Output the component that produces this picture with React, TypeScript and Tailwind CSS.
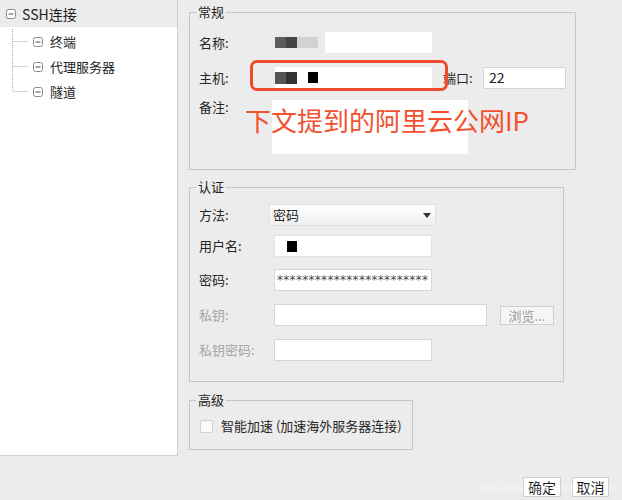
import React from "react";

const MinusBox = () => (
  <svg width="10" height="10" viewBox="0 0 10 10" className="shrink-0">
    <rect x="0.5" y="0.5" width="9" height="9" rx="2" fill="white" stroke="#8a8a8a" strokeWidth="1" />
    <line x1="2.5" y1="5" x2="7.5" y2="5" stroke="#6a6a6a" strokeWidth="1.2" />
  </svg>
);

function Legend({ children }: { children: React.ReactNode }) {
  return (
    <span className="absolute -top-[10px] left-[6px] px-[2px] bg-[#ececec] leading-[18px] text-[13px] text-[#222]">
      {children}
    </span>
  );
}

export default function App() {
  return (
    <div className="relative w-[622px] h-[500px] overflow-hidden bg-[#ececec] flex font-['Noto_Sans_CJK_SC',sans-serif] text-[13px] text-[#262626]">
      {/* Left tree panel */}
      <div className="w-[178px] h-[456px] shrink-0 bg-white border-r border-b border-[#cfcfcf] flex flex-col">
        <div className="h-[27px] bg-[#ebebeb] flex items-center pl-[6px] gap-[6px]">
          <MinusBox />
          <span className="text-[14px] leading-[18px] text-[#1e1e1e]">SSH连接</span>
        </div>
        <div className="flex">
          <svg width="30" height="78" viewBox="0 0 30 78" className="shrink-0">
            <line x1="12.5" y1="2" x2="12.5" y2="64" stroke="#a8a8a8" strokeDasharray="1 1" />
            <line x1="12.5" y1="14.5" x2="28" y2="14.5" stroke="#a8a8a8" strokeDasharray="1 1" />
            <line x1="12.5" y1="39.5" x2="28" y2="39.5" stroke="#a8a8a8" strokeDasharray="1 1" />
            <line x1="12.5" y1="64.5" x2="28" y2="64.5" stroke="#a8a8a8" strokeDasharray="1 1" />
          </svg>
          <div className="flex flex-col pt-[2px]">
            {["终端", "代理服务器", "隧道"].map((t) => (
              <div key={t} className="h-[25px] flex items-center pl-[3px] gap-[7px]">
                <MinusBox />
                <span className="text-[13px] leading-[18px] text-[#1e1e1e]">{t}</span>
              </div>
            ))}
          </div>
        </div>
      </div>

      {/* Right content */}
      <div className="flex-1 pl-[11px] pt-[12px] flex flex-col">
        {/* 常规 */}
        <div className="relative w-[387px] h-[158px] border border-[#c6c6c6] flex flex-col pt-[19px]">
          <Legend>常规</Legend>
          <div className="flex items-center h-[21px]">
            <span className="w-[85px] pl-[9px]">名称:</span>
            <div className="w-[157px] h-[21px] flex">
              <div className="w-[50px] h-[21px] bg-[#ebebeb] flex items-center">
                <div className="w-[11px] h-[11px] bg-[#5c5c5c]" />
                <div className="w-[11px] h-[11px] bg-[#444]" />
                <div className="w-[21px] h-[11px] bg-[#d2d2d2]" />
              </div>
              <div className="flex-1 h-[21px] bg-white" />
            </div>
          </div>
          <div className="flex items-center h-[21px] mt-[14px]">
            <span className="w-[85px] pl-[9px]">主机:</span>
            <div className="w-[157px] h-[21px] bg-white flex items-center">
              <div className="w-[11px] h-[12px] bg-[#555]" />
              <div className="w-[11px] h-[12px] bg-[#333]" />
              <div className="w-[10px] h-[11px] ml-[11px] bg-black" />
            </div>
            <span className="ml-[11px] w-[40px]">端口:</span>
            <div className="w-[83px] h-[22px] bg-white border border-[#d6d6d6] flex items-center pl-[5px] text-[14px] text-[#1a1a1a]">
              22
            </div>
          </div>
          <div className="flex items-start mt-[12px]">
            <span className="w-[82px] pl-[9px] leading-[16px] mt-[-1px]">备注:</span>
            <div className="w-[196px] h-[54px] bg-white" />
          </div>

          {/* red annotation */}
          <div className="absolute left-[60px] top-[47px] w-[198px] h-[31px] border-[3px] border-[#ef4a2c] rounded-[7px]" />
          <div className="absolute left-[55px] top-[92px] text-[26px] leading-[30px] text-[#f2512f] whitespace-nowrap">
            下文提到的阿里云公网IP
          </div>
        </div>

        {/* 认证 */}
        <div className="relative mt-[17px] w-[375px] h-[195px] border border-[#c6c6c6] flex flex-col pt-[16px]">
          <Legend>认证</Legend>
          <div className="flex items-center h-[22px]">
            <span className="w-[79px] pl-[9px]">方法:</span>
            <div className="w-[167px] h-[22px] bg-gradient-to-b from-white to-[#efefef] border border-[#e0e0e0] flex items-center justify-between pl-[3px] pr-[4px]">
              <span>密码</span>
              <svg width="8" height="5" viewBox="0 0 8 5">
                <path d="M0 0 L8 0 L4 5 Z" fill="#333" />
              </svg>
            </div>
          </div>
          <div className="flex items-center h-[22px] mt-[9px]">
            <span className="w-[84px] pl-[9px]">用户名:</span>
            <div className="w-[158px] h-[22px] bg-white border border-[#e2e2e2] flex items-center pl-[12px]">
              <div className="w-[10px] h-[11px] bg-black" />
            </div>
          </div>
          <div className="flex items-center h-[22px] mt-[12px]">
            <span className="w-[84px] pl-[9px]">密码:</span>
            <div className="w-[158px] h-[22px] bg-white border border-[#d6d6d6] flex items-center pl-[2px] font-['DejaVu_Sans',sans-serif] text-[12px] tracking-[0.3px] text-[#4a4a4a] overflow-hidden whitespace-nowrap">
              ************************
            </div>
          </div>
          <div className="flex items-center h-[22px] mt-[13px]">
            <span className="w-[84px] pl-[9px] text-[#a6a6a6]">私钥:</span>
            <div className="w-[213px] h-[22px] bg-white border border-[#d6d6d6]" />
            <div className="ml-[13px] w-[54px] h-[19px] bg-[#f5f5f5] border border-[#cfcfcf] flex items-center justify-center text-[13px] text-[#9a9a9a] leading-none">
              浏览...
            </div>
          </div>
          <div className="flex items-center h-[22px] mt-[13px]">
            <span className="w-[84px] pl-[9px] text-[#a6a6a6]">私钥密码:</span>
            <div className="w-[158px] h-[22px] bg-white border border-[#d6d6d6]" />
          </div>
        </div>

        {/* 高级 */}
        <div className="relative mt-[18px] w-[224px] h-[50px] border border-[#c6c6c6] flex items-start pt-[17px] pl-[10px]">
          <Legend>高级</Legend>
          <div className="flex items-center gap-[8px]">
            <div className="w-[13px] h-[13px] bg-[#fafafa] border border-[#cfcfcf] rounded-[2px]" />
            <span className="leading-[16px]">智能加速 (加速海外服务器连接)</span>
          </div>
        </div>

        {/* Buttons */}
        <div className="mt-[27px] flex justify-end pr-[13px] gap-[11px]">
          <div className="w-[38px] h-[20px] bg-white border border-[#cdcdcd] flex items-center justify-center text-[14px] text-[#1a1a1a]">
            确定
          </div>
          <div className="w-[37px] h-[20px] bg-white border border-[#cdcdcd] flex items-center justify-center text-[14px] text-[#1a1a1a]">
            取消
          </div>
        </div>
      </div>

      <div className="absolute left-[480px] top-[482px] text-[9.5px] leading-[12px] text-white/60 whitespace-nowrap font-['Liberation_Sans',sans-serif]">
        https://blog.csdn.net/dayyun_zhi
      </div>
    </div>
  );
}
